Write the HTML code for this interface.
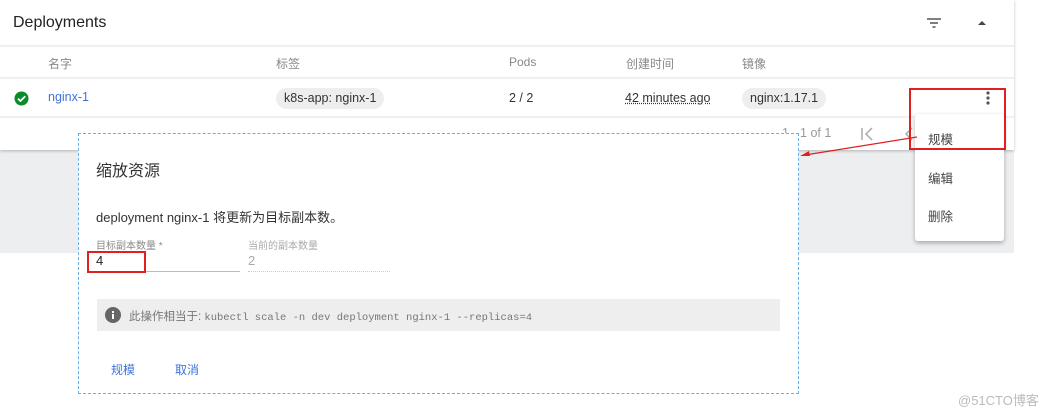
<!DOCTYPE html>
<html><head><meta charset="utf-8"><style>
body{margin:0;width:1054px;height:415px;background:#fff;position:relative;overflow:hidden;font-family:"Liberation Sans","Noto Sans CJK SC",sans-serif;}
.a{position:absolute;white-space:nowrap;}
.chip{position:absolute;background:#eee;border-radius:11px;height:21px;line-height:21px;padding:0 8px;font-size:12.5px;color:#333;}
</style></head><body>
<div class="a" style="left:0;top:150px;width:1014px;height:103px;background:#eceef0"></div>
<div class="a" style="left:0;top:0;width:1014px;height:150px;background:#fff;box-shadow:0 1px 3px rgba(0,0,0,.25)"></div>
<div class="a" style="left:0;top:45px;width:1014px;height:2px;background:#f0f0f0"></div>
<div class="a" style="left:0;top:77px;width:1014px;height:2px;background:#f0f0f0"></div>
<div class="a" style="left:0;top:116px;width:1014px;height:2px;background:#f0f0f0"></div>
<div class="a" style="left:13px;top:14px;font-size:16px;color:#222">Deployments</div>
<svg class="a" style="left:926px;top:17px" width="16" height="12"><path d="M1 2h14M4 6h8M6.5 10h3" stroke="#555" stroke-width="1.6"/></svg>
<svg class="a" style="left:977px;top:20px" width="10" height="6"><path d="M1 5L5 1 9 5z" fill="#444"/></svg>
<div class="a" style="left:48px;top:55px;font-size:12px;color:#888">名字</div>
<div class="a" style="left:276px;top:55px;font-size:12px;color:#888">标签</div>
<div class="a" style="left:509px;top:55px;font-size:12px;color:#888">Pods</div>
<div class="a" style="left:626px;top:55px;font-size:12px;color:#888">创建时间</div>
<div class="a" style="left:742px;top:55px;font-size:12px;color:#888">镜像</div>
<svg class="a" style="left:14px;top:91px" width="15" height="15"><circle cx="7.5" cy="7.5" r="7" fill="#0a8a2a"/><path d="M4 7.6l2.4 2.4 4.8-4.8" stroke="#fff" stroke-width="1.8" fill="none"/></svg>
<div class="a" style="left:48px;top:90px;font-size:12.5px;color:#3f73d8">nginx-1</div>
<div class="chip" style="left:276px;top:88px">k8s-app: nginx-1</div>
<div class="a" style="left:509px;top:91px;font-size:12.5px;color:#333">2 / 2</div>
<div class="a" style="left:625px;top:91px;font-size:12.5px;color:#333;text-decoration:underline dotted">42 minutes ago</div>
<div class="chip" style="left:742px;top:88px">nginx:1.17.1</div>
<svg class="a" style="left:986px;top:91px" width="4" height="14"><circle cx="2" cy="2" r="1.6" fill="#555"/><circle cx="2" cy="7" r="1.6" fill="#555"/><circle cx="2" cy="12" r="1.6" fill="#555"/></svg>
<div class="a" style="left:782px;top:126px;font-size:12.5px;color:#999">1 - 1 of 1</div>
<svg class="a" style="left:860px;top:127px" width="60" height="14"><path d="M2 1v12M12 1L6 7l6 6M52 1L46 7l6 6" stroke="#aaa" stroke-width="1.5" fill="none"/></svg>
<div class="a" style="left:78px;top:133px;width:719px;height:259px;background:#fff;border:1px dashed #6aaee8"></div>
<div class="a" style="left:96px;top:157px;font-size:16px;color:#333">缩放资源</div>
<div class="a" style="left:96px;top:207px;font-size:13px;color:#333">deployment nginx-1 将更新为目标副本数。</div>
<div class="a" style="left:96px;top:237px;font-size:10px;color:#888">目标副本数量 *</div>
<div class="a" style="left:248px;top:237px;font-size:10px;color:#aaa">当前的副本数量</div>
<div class="a" style="left:96px;top:253px;font-size:13px;color:#222">4</div>
<div class="a" style="left:248px;top:253px;font-size:13px;color:#aaa">2</div>
<div class="a" style="left:96px;top:271px;width:144px;height:1px;background:#bbb"></div>
<div class="a" style="left:248px;top:271px;width:142px;border-top:1px dotted #ccc"></div>
<div class="a" style="left:87px;top:251px;width:55px;height:18px;border:2px solid #e02020"></div>
<div class="a" style="left:97px;top:299px;width:683px;height:32px;background:#eeeeee"></div>
<svg class="a" style="left:105px;top:307px" width="16" height="16"><circle cx="8" cy="8" r="8" fill="#666"/><rect x="7" y="7" width="2" height="5" fill="#fff"/><rect x="7" y="4" width="2" height="2" fill="#fff"/></svg>
<div class="a" style="left:129px;top:308px;font-size:11.5px;color:#777">此操作相当于: <span style="font-family:'Liberation Mono',monospace;font-size:10.5px">kubectl scale -n dev deployment nginx-1 --replicas=4</span></div>
<div class="a" style="left:111px;top:361px;font-size:12px;color:#3f73d8">规模</div>
<div class="a" style="left:175px;top:361px;font-size:12px;color:#3f73d8">取消</div>
<div class="a" style="left:915px;top:114px;width:89px;height:127px;background:#fff;border-radius:3px;box-shadow:0 2px 5px rgba(0,0,0,.3)"></div>
<div class="a" style="left:928px;top:129px;font-size:12.5px;color:#444">规模</div>
<div class="a" style="left:928px;top:168px;font-size:12.5px;color:#444">编辑</div>
<div class="a" style="left:928px;top:206px;font-size:12.5px;color:#444">删除</div>
<div class="a" style="left:909px;top:88px;width:93px;height:58px;border:2px solid #e02020"></div>
<svg class="a" style="left:795px;top:130px" width="130" height="30"><path d="M122 7L10 25" stroke="#e02020" stroke-width="1.2"/><path d="M5 26l9-5 1 5z" fill="#e02020"/></svg>
<div class="a" style="left:958px;top:390px;font-size:13px;color:#bbb">@51CTO博客</div>
</body></html>
